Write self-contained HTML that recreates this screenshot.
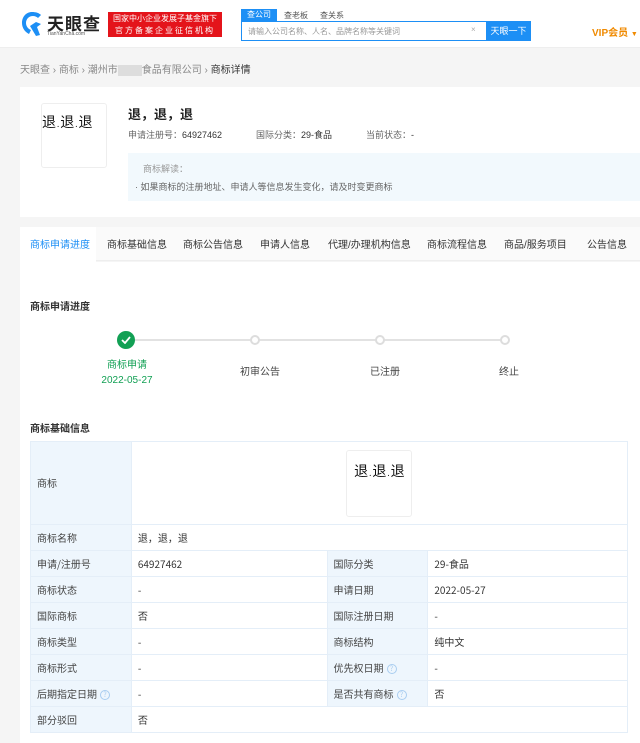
<!DOCTYPE html>
<html><head><meta charset="utf-8"><style>
*{margin:0;padding:0;box-sizing:border-box}
body{width:640px;height:743px;overflow:hidden;background:#f5f5f5;font-family:"Liberation Sans","Noto Sans CJK SC",sans-serif;font-size:10px;color:#333;position:relative}
.a{position:absolute;white-space:nowrap}
.hdr{left:0;top:0;width:640px;height:48px;background:#fff;border-bottom:1px solid #eee}
.card{background:#fff}
table{border-collapse:collapse;position:absolute;left:30px;top:441px;width:598px}
td{border:1px solid #e4eef8;height:26px;padding:0 6px;font-size:10px;color:#333;vertical-align:middle;line-height:14px;font-family:"Noto Sans CJK SC","Liberation Sans",sans-serif}
td.l{background:#eef6fd;color:#444}
.q{display:inline-block;width:10px;height:10px;border:1px solid #a9cdf0;border-radius:50%;color:#a9cdf0;font-size:7px;text-align:center;line-height:8px;margin-left:3px;vertical-align:middle}
.tab{top:236px;font-size:10px;color:#333}
.dot{width:10px;height:10px;border:2px solid #ddd;border-radius:50%;background:#fff;top:335px}
.sl{font-size:10px;color:#444;top:363px}
.tm{font-family:"Noto Sans CJK SC",sans-serif;font-size:14px;color:#111}
.tm i{font-style:normal;font-size:8px;margin:0 1px}
</style></head><body>
<div class="a hdr"></div>
<svg class="a" style="left:20px;top:10px" width="24" height="28" viewBox="0 0 24 28"><path d="M12 2C6 2 2 7 2 13c0 5 3 9 7 11l2-4c-3-1-5-4-5-7 0-4 3-7 7-7 2 0 4 1 5 2l3-3C19 3 16 2 12 2z" fill="#1d8ff5"/><path d="M10 16l6-4 5 2-4 3 3 8-4 1z" fill="#1d8ff5"/></svg>
<div class="a" style="left:47px;top:10px;font-size:17px;font-weight:bold;color:#222;letter-spacing:1px">天眼查</div>
<div class="a" style="left:47px;top:31px;font-size:5px;color:#555">TianYanCha.com</div>
<div class="a" style="left:108px;top:12px;width:114px;height:25px;background:#e4141b;color:#fff;font-size:8px;line-height:12px;text-align:center;padding-top:1px">国家中小企业发展子基金旗下<br><span style="letter-spacing:2px">官方备案企业征信机构</span></div>
<div class="a" style="left:241px;top:9px;width:36px;height:12px;background:#1d8ff5;color:#fff;font-size:8px;text-align:center;line-height:12px">查公司</div>
<div class="a" style="left:284px;top:10px;font-size:8px;color:#555">查老板</div>
<div class="a" style="left:320px;top:10px;font-size:8px;color:#555">查关系</div>
<div class="a" style="left:241px;top:21px;width:290px;height:20px;border:1px solid #1d8ff5;background:#fff"></div>
<div class="a" style="left:248px;top:26px;font-size:8px;color:#999">请输入公司名称、人名、品牌名称等关键词</div>
<div class="a" style="left:471px;top:25px;font-size:8px;color:#aaa">×</div>
<div class="a" style="left:486px;top:21px;width:45px;height:20px;background:#1d8ff5;color:#fff;font-size:9px;text-align:center;line-height:20px">天眼一下</div>
<div class="a" style="left:592px;top:24px;font-size:10px;font-weight:bold;color:#f08a00">VIP会员 <span style="font-size:7px">▼</span></div>
<div class="a" style="left:20px;top:61px;font-size:10px;color:#888">天眼查 › 商标 › 潮州市<span style="display:inline-block;width:24px;height:11px;background:#ddd;vertical-align:middle"></span>食品有限公司 › <span style="color:#333">商标详情</span></div>
<div class="a card" style="left:20px;top:87px;width:620px;height:130px"></div>
<div class="a" style="left:41px;top:103px;width:66px;height:65px;border:1px solid #eee;border-radius:3px;background:#fff"></div>
<div class="a tm" style="left:42px;top:112px">退<i>.</i>退<i>.</i>退</div>
<div class="a" style="left:128px;top:104px;font-size:13px;font-weight:bold;color:#222">退，退，退</div>
<div class="a" style="left:128px;top:128px;font-size:9px;color:#666">申请注册号：<span style="color:#333">64927462</span></div>
<div class="a" style="left:256px;top:128px;font-size:9px;color:#666">国际分类：<span style="color:#333">29-食品</span></div>
<div class="a" style="left:366px;top:128px;font-size:9px;color:#666">当前状态：<span style="color:#333">-</span></div>
<div class="a" style="left:128px;top:153px;width:512px;height:48px;background:#f2f9fd"></div>
<div class="a" style="left:143px;top:162px;font-size:9px;color:#999">商标解读：</div>
<div class="a" style="left:135px;top:180px;font-size:9px;color:#666">· 如果商标的注册地址、申请人等信息发生变化，请及时变更商标</div>
<div class="a" style="left:20px;top:227px;width:620px;height:34px;background:#fafafa;border-bottom:1px solid #eee"></div>
<div class="a" style="left:20px;top:227px;width:76px;height:35px;background:#fff"></div>
<div class="a tab" style="left:30px;color:#1d8ff5">商标申请进度</div>
<div class="a tab" style="left:107px">商标基础信息</div>
<div class="a tab" style="left:183px">商标公告信息</div>
<div class="a tab" style="left:260px">申请人信息</div>
<div class="a tab" style="left:328px">代理/办理机构信息</div>
<div class="a tab" style="left:427px">商标流程信息</div>
<div class="a tab" style="left:504px">商品/服务项目</div>
<div class="a tab" style="left:587px">公告信息</div>
<div class="a card" style="left:20px;top:262px;width:620px;height:481px"></div>
<div class="a" style="left:30px;top:298px;font-size:10px;font-weight:bold;color:#333">商标申请进度</div>
<div class="a" style="left:126px;top:339px;width:380px;height:2px;background:#e2e2e2"></div>
<div class="a" style="left:117px;top:331px;width:18px;height:18px;border-radius:50%;background:#12a054"></div>
<svg class="a" style="left:121px;top:336px" width="10" height="8"><path d="M1 4l3 3 5-6" stroke="#fff" stroke-width="1.8" fill="none"/></svg>
<div class="a dot" style="left:250px"></div>
<div class="a dot" style="left:375px"></div>
<div class="a dot" style="left:500px"></div>
<div class="a" style="left:96px;top:358px;font-size:10px;color:#12a054;text-align:center;width:62px;line-height:15px">商标申请<br>2022-05-27</div>
<div class="a sl" style="left:240px">初审公告</div>
<div class="a sl" style="left:370px">已注册</div>
<div class="a sl" style="left:499px">终止</div>
<div class="a" style="left:30px;top:420px;font-size:10px;font-weight:bold;color:#333">商标基础信息</div>
<table>
<colgroup><col style="width:101px"><col style="width:196px"><col style="width:101px"><col style="width:200px"></colgroup>
<tr><td class="l" style="height:83px">商标</td><td colspan="3" style="text-align:center"><div style="display:inline-block;width:66px;height:67px;border:1px solid #eee;border-radius:3px;text-align:center;padding-top:10px"><span class="tm" style="line-height:20px">退<i>.</i>退<i>.</i>退</span></div></td></tr>
<tr><td class="l">商标名称</td><td colspan="3">退，退，退</td></tr>
<tr><td class="l">申请/注册号</td><td>64927462</td><td class="l">国际分类</td><td>29-食品</td></tr>
<tr><td class="l">商标状态</td><td>-</td><td class="l">申请日期</td><td>2022-05-27</td></tr>
<tr><td class="l">国际商标</td><td>否</td><td class="l">国际注册日期</td><td>-</td></tr>
<tr><td class="l">商标类型</td><td>-</td><td class="l">商标结构</td><td>纯中文</td></tr>
<tr><td class="l">商标形式</td><td>-</td><td class="l">优先权日期<span class="q">?</span></td><td>-</td></tr>
<tr><td class="l">后期指定日期<span class="q">?</span></td><td>-</td><td class="l">是否共有商标<span class="q">?</span></td><td>否</td></tr>
<tr><td class="l">部分驳回</td><td colspan="3">否</td></tr>
</table>
</body></html>
